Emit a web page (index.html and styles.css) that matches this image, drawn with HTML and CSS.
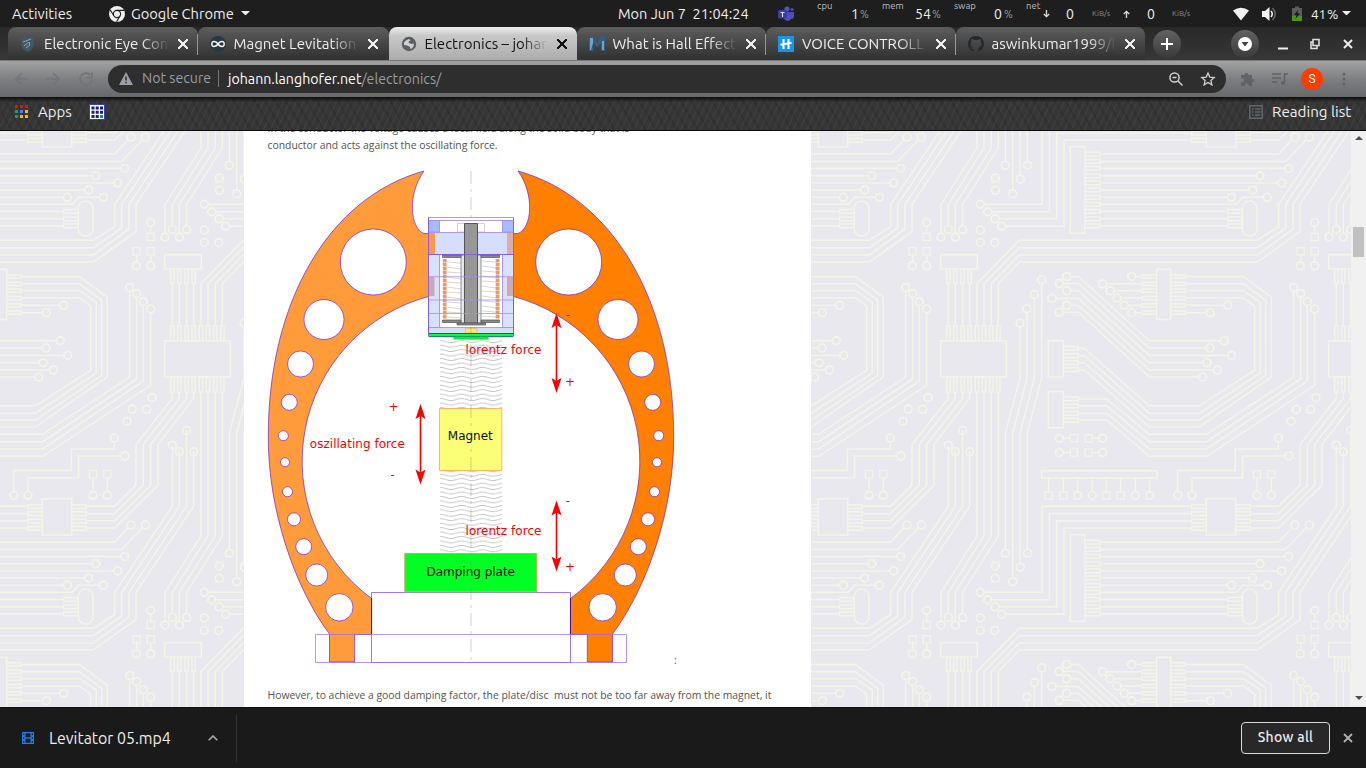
FILE: index.html
```html
<!DOCTYPE html>
<html lang="en">
<head>
<meta charset="utf-8">
<title>Electronics – johann.langhofer.net</title>
<link rel="stylesheet" href="styles.css">
</head>
<body>
<header class="system">
  <span>Activities</span>
  <svg class="ic16" viewBox="0 0 16 16"><circle cx="8" cy="8" r="8" fill="#eee"/><circle cx="8" cy="8" r="3.6" fill="#eee" stroke="#1e1e1e" stroke-width="1.1"/><path d="M8 4.4H15M4.8 9.8L1.3 4M11.1 9.8L7.6 15.8" stroke="#1e1e1e" stroke-width="1.1"/></svg>
  <span class="w-chrome">Google Chrome</span>
  <i class="caret"></i>
  <span class="w-date">Mon Jun 7&nbsp; 21:04:24</span>
  <svg class="ic16" viewBox="0 0 16 16"><circle cx="9" cy="3" r="2.6" fill="#5558af"/><circle cx="14" cy="3.5" r="1.7" fill="#4648a0"/><path d="M6 6H16V10a3 3 0 0 1-3 3Q10 17 6 13Z" fill="#4d50b5"/><rect y="4" width="9" height="8.500" rx="1" fill="#3b3da5"/><path d="M2.500 6.500H6.500M4.500 6.500V11" stroke="#ddd" stroke-width="1.100"/></svg>
  <small>cpu</small><b>1</b><em>%</em>
  <small>mem</small><b>54</b><em>%</em>
  <small>swap</small><b>0</b><em>%</em>
  <small>net</small>
  <svg class="arr" viewBox="0 0 7 8"><path d="M3.500 0V6.500M.8 4L3.500 6.700 6.200 4" stroke="#ddd" fill="none" stroke-width="1.300"/></svg>
  <b>0</b><em class="unit">KiB/s</em>
  <svg class="arr" viewBox="0 0 7 8"><path d="M3.500 8V1.500M.8 4L3.500 1.300 6.200 4" stroke="#ddd" fill="none" stroke-width="1.300"/></svg>
  <b>0</b><em class="unit">KiB/s</em>
  <svg class="ic16" viewBox="0 0 16 16"><path d="M0 4.500Q8-1 16 4.500L8 14.500Z" fill="#f2f2f2"/></svg>
  <svg class="ic16" viewBox="0 0 16 16"><path d="M0 5H3L7.500 1V15L3 11H0Z" fill="#f2f2f2"/><path d="M9 5Q11.500 8 9 11" stroke="#eee" stroke-width="1.600" fill="none"/><path d="M10.500 2Q16 8 10.500 14" stroke="#666" stroke-width="1.600" fill="none"/></svg>
  <svg class="ic16" viewBox="0 0 16 16"><path d="M0 2H3V.500H7V2H10V15H0Z" fill="#5c5c5c"/><path d="M0 10H10V15H0Z" fill="#4e9a06"/><path d="M6 4L2 9H4.500L3.500 13 8 7.500H5.500Z" fill="#1a1a1a"/></svg>
  <span class="w-bat">41&#8202;%</span>
  <i class="caret"></i>
</header>

<nav class="tabs">
  <div class="tab sep">
    <svg class="ic16" viewBox="0 0 16 16"><path d="M1 2Q5 2 8 0Q10 2 14 2V8Q14 13 8 16Q1 13 1 8Z" fill="#3e5866"/><path d="M3 6L11 3M4 10L9 6L10 9L6 12" stroke="#98a5ab" fill="none"/></svg>
    <span class="title t1">Electronic Eye Con</span><i class="x"></i>
  </div>
  <div class="tab last-left">
    <svg class="ic16" viewBox="0 0 16 16"><circle cx="8" cy="8" r="8" fill="#263840"/><path d="M8 8C6 5 1.800 4.500 1.800 8S6 11 8 8S14.200 4.500 14.200 8S10 11 8 8" fill="none" stroke="#fff" stroke-width="1.400"/></svg>
    <span class="title t2">Magnet Levitation</span><i class="x"></i>
  </div>
  <div class="tab active">
    <svg class="ic16" viewBox="0 0 16 16"><circle cx="8" cy="8" r="7.200" fill="#5a5d62"/><path d="M3 6.500Q5 3.500 8 3L9.500 4.500 7.500 5.500 8 7 10.500 8 12.800 7.500V9.500Q12 12 9.500 13L9 11 6.500 9.500 3 9Z" fill="#cfcfcf"/></svg>
    <span class="title t3">Electronics – johar</span><i class="x"></i>
  </div>
  <div class="tab sep first-right">
    <svg class="ic16" viewBox="0 0 16 16"><path d="M0 0H4L8 7 11 0H16V15H12V7L8 11 4 6V15H0Z" fill="#365e83"/><path d="M1 2H4V7L2 14H1ZM13 5H15V14H13Z" fill="#68a9c9"/></svg>
    <span class="title t4">What is Hall Effect</span><i class="x"></i>
  </div>
  <div class="tab sep">
    <svg class="ic16" viewBox="0 0 16 16"><path d="M0 0H16V16H0Z" fill="#1595f3"/><path d="M5.500 3V13M10.500 3V13M2.500 8.800L13.500 6.800" stroke="#fff" stroke-width="2.100"/></svg>
    <span class="title t5">VOICE CONTROLL</span><i class="x"></i>
  </div>
  <div class="tab">
    <svg class="ic16" viewBox="0 0 16 16"><path d="M5.500 15.500V13C3 13.500 3 11.500 1.800 11C3.500 10.500 3.800 12.500 5.500 11.800C2.500 11 2 8 3.400 5.500Q3 4 3.600 3Q5 3 6 4H10Q11 3 12.400 3Q13 4 12.600 5.500C14 8 13.500 11 10.500 11.600V15.500A8 8 0 1 0 5.500 15.500" fill="#24292f"/></svg>
    <span class="title t6">aswinkumar1999/l</span><i class="x"></i>
  </div>
  <div class="round plus"><svg viewBox="0 0 12 12"><path d="M6 0V12M0 6H12" stroke="#fff" stroke-width="2"/></svg></div>
  <div class="round search"><svg viewBox="0 0 14 14"><circle cx="7" cy="7" r="7" fill="#fff"/><path d="M3.500 5H10.500L7 9.500Z" fill="#444"/></svg></div>
  <svg class="win" viewBox="0 0 76 12"><path d="M0 10.500H10" stroke="#eee" stroke-width="2"/><path d="M35 1.500H41V7.500H35ZM35 4H33V10.500H39V8" stroke="#ddd" stroke-width="1.600" fill="none"/><path d="M66 2L74 10M74 2L66 10" stroke="#eee" stroke-width="2"/></svg>
</nav>

<div class="toolbar">
  <svg class="navs" viewBox="0 0 80 16" fill="none" stroke="#737578" stroke-width="1.700"><path d="M14 8H2M8 2L2 8 8 14M32 8H45M39 2L45 8 39 14"/><path d="M76.500 4A6 6 0 1 0 78 9M78 1.500V6.500H72.500"/></svg>
  <div class="omni">
    <svg class="warn" viewBox="0 0 14 13"><path d="M7 0L14 13H0Z" fill="#9aa0a6"/><path d="M7 4.500V8.500M7 9.700V11.300" stroke="#2d2d2d" stroke-width="1.500"/></svg>
    <span class="insecure">Not secure</span>
    <span class="url"><span>johann.langhofer.net</span><span class="path">/electronics/</span></span>
    <svg class="oicons" viewBox="0 0 48 16" fill="none" stroke="#cfd0d2" stroke-width="1.500"><circle cx="6.500" cy="6.500" r="4.600"/><path d="M10 10L14.500 14.500M4.500 6.500H8.500"/><path d="M40 2L41.800 6.100 46.200 6.500 42.900 9.500 43.900 13.900 40 11.500 36.100 13.900 37.100 9.500 33.800 6.500 38.200 6.100Z" stroke-width="1.300"/></svg>
  </div>
  <svg class="ext" viewBox="0 0 48 16"><path d="M1 4H4.500A2 2 0 1 1 8.500 4H12V7.500A2 2 0 1 1 12 11.500V15H8.800A2 2 0 1 0 4.500 15H1V11A2 2 0 1 0 1 7.500Z" fill="#606367"/><path d="M32 3H41M32 7H41M32 11H37.500M44.500 12V3H48" stroke="#606367" stroke-width="1.600" fill="none"/><circle cx="43" cy="12" r="2.100" fill="#606367"/></svg>
  <span class="avatar">S</span>
  <svg class="dots" viewBox="0 0 4 14" fill="#606367"><circle cx="2" cy="2" r="1.500"/><circle cx="2" cy="7" r="1.500"/><circle cx="2" cy="12" r="1.500"/></svg>
</div>

<div class="bookmarks">
  <svg class="grid" viewBox="0 0 13 13"><path d="M0 0H3V3H0ZM5 0H8V3H5ZM10 0H13V3H10Z" fill="#f00d0d"/><path d="M0 5H3V8H0ZM0 10H3V13H0Z" fill="#19a15f"/><path d="M5 5H8V8H5Z" fill="#4285f4"/><path d="M10 5H13V8H10ZM5 10H8V13H5ZM10 10H13V13H10Z" fill="#fbb713"/></svg>
  <span class="apps">Apps</span>
  <svg class="ic16" viewBox="0 0 16 16"><path d="M.5.500H15.500V15.500H.5Z" fill="#fff" stroke="#3b3bc4"/><path d="M2.500 2.500H5.500V5.500H2.500ZM6.700 2.500H9.700V5.500H6.700ZM11 2.500H14V5.500H11ZM2.500 6.700H5.500V9.700H2.500ZM6.700 6.700H9.700V9.700H6.700ZM11 6.700H14V9.700H11ZM2.500 11H5.500V14H2.500ZM6.700 11H9.700V14H6.700Z" fill="#14217e"/><path d="M11 11H14V14H11Z" fill="#0a8f91"/></svg>
  <svg class="rl" viewBox="0 0 14 14" fill="none" stroke="#62656a"><path d="M.8.800H13.200V13.200H.8Z" stroke-width="1.500"/><path d="M3 4H4.500M6 4H11.500M3 7H4.500M6 7H11.500M3 10H4.500M6 10H11.500" stroke-width="1.400"/></svg>
  <span class="reading">Reading list</span>
</div>

<main class="view">
  <svg class="board" width="1358" height="577" viewBox="0 1 1358 577">
    <defs>
      <g id="tile">
        <g transform="translate(29) scale(.33333 .36994)">
          <path class="tr" d="M40 997h88v98h-88zM-4 1013h44v10h-44zM-4 1032h44v10h-44zM-4 1052h44v10h-44zM-4 1072h44v10h-44zM128 1013h44v10h-44zM128 1032h44v10h-44zM128 1052h44v10h-44zM128 1072h44v10h-44z"/>
          <path class="tr" d="M526 201H711V-32H1160M548 221H733V-12H1160M570 240H755V8H1160M590 260H777V27H1160"/>
          <path class="tr" d="M430 708V725L321 850V960L257 1017H172M451 708V725L343 850V960L257 1037H172M473 708V725L365 850V960L257 1056H172M494 708V725L387 850V960L257 1076H172"/>
          <path class="tr" d="M796 45h44v234h-44zM840 60h45v10h-45zM840 80h45v10h-45zM840 99h45v10h-45zM840 119h45v10h-45zM840 138h45v10h-45zM840 157h45v10h-45zM840 177h45v10h-45zM840 196h45v10h-45zM840 215h45v10h-45zM840 235h45v10h-45zM840 254h45v10h-45z"/>
          <path class="tr" d="M885 65H1421L1470 19M885 85H1442L1512 19M885 104H1451M885 124H1365M885 143H1430M885 162H1343M885 182H1279M885 201H1295L1313 182H1387M885 220H1268M885 240H1268M885 259H1268"/>
          <rect class="tr" x="148" y="192" width="44" height="95" rx="22" ry="20"/>
          <path class="tr" d="M104 215h44v10h-44zM104 235h44v10h-44zM104 254h44v10h-44z"/>
          <path class="tr" d="M516 530V415L643 298H1357L1421 261V201L1594 -32V-197M537 530V415L643 318H1357L1442 265V201L1615 -32V-179M559 530V415L643 338H1357L1464 268V201L1637 -32V-237M580 530V415L643 357H1357L1485 275V201L1658 -32V-179"/>
          <path class="tr" d="M516 708V1097L408 1250V1338M537 708V1097L430 1250V1318M559 708V1097L451 1250V1338M580 708V1097L473 1250V1318"/>
          <path class="tr" d="M407 337h110v39h-110zM407 570h197v98h-197zM425 376h10v39h-10zM446 376h10v39h-10zM468 376h10v39h-10zM489 376h10v39h-10zM430 415V530M451 415V530M473 415V530M494 415V530"/>
          <path class="tr" d="M425 530h10v40h-10zM446 530h10v40h-10zM468 530h10v40h-10zM489 530h10v40h-10zM511 530h10v40h-10zM532 530h10v40h-10zM554 530h10v40h-10zM575 530h10v40h-10zM425 668h10v40h-10zM446 668h10v40h-10zM468 668h10v40h-10zM489 668h10v40h-10zM511 668h10v40h-10zM532 668h10v40h-10zM554 668h10v40h-10zM575 668h10v40h-10z"/>
          <path class="tr" d="M645 522V670L601 820V1144M666 483V670L623 820V1221M688 445V670L645 820V1183M710 405V670L667 820V1144M365 250V289M323 328V367M365 328V367"/>
          <path class="tr" d="M730 570h45v98h-45zM730 707h45v98h-45zM776 585h44v10h-44zM776 605h44v10h-44zM776 624h44v10h-44zM776 643h44v10h-44zM776 722h44v10h-44zM776 741h44v10h-44zM776 761h44v10h-44zM776 780h44v10h-44zM763 833H807M763 872H807M851 833H893M851 872H893M710 921H1056V941H710ZM731 941V988M775 941V988M818 941V988M862 941V988M904 941V988M947 941V988M991 941V988M1034 941V988"/>
          <path id="p1" class="pad" d="M526 201h0M548 221h0M570 240h0M590 260h0M306 19h0M349 19h0M287 104h0M201 124h0M266 143h0M179 162h0M115 182h0M223 182h0M430 852h0M451 870h0M473 812h0M494 870h0M408 289h0M430 269h0M451 289h0M473 269h0M645 522h0M666 483h0M688 445h0M710 405h0M601 95h0M623 172h0M646 133h0M668 95h0M571 130h0M571 163h0M526 270h0M526 304h0M569 304h0M369 723h0M310 755h0M353 755h0M294 787h0M365 250h0M322 367h0M365 367h0M785 396h0M763 415h0M785 434h0M741 455h0M785 474h0M763 493h0M763 833h0M763 872h0M893 833h0M893 872h0M818 988h0M862 988h0M991 988h0M1034 988h0"/>
          <use href="#p1" class="hole"/>
          <path id="q1" class="pad sq" d="M365 289h0M323 328h0M365 328h0M807 833h0M851 833h0M807 872h0M851 872h0M731 988h0M775 988h0M904 988h0M947 988h0"/>
          <use href="#q1" class="hole"/>
        </g>
        <g transform="translate(309) scale(.33333 .40686)">
          <path class="tr" d="M626 387V607L365 748H193L65 661H-20M647 402V612L365 766H193L65 678H-20M667 422V617L365 784H193L65 696H-20M689 440V627L365 802H193L65 713H-20"/>
          <path class="tr" d="M301 360H475L559 411V607L343 730H193L-2 590H-20M301 378H475L542 418V603L343 713H193L-2 572H-20M301 395H475L526 423V597L343 696H193L-2 555H-20M301 413H475L509 433V590L343 678H193L-2 537H-20M301 431H428M301 449H376"/>
          <path class="tr" d="M215 342h42v124h-42zM171 356h44v8h-44zM171 374h44v8h-44zM171 391h44v8h-44zM171 409h44v8h-44zM171 427h44v8h-44zM171 445h44v8h-44zM257 356h44v8h-44zM257 374h44v8h-44zM257 391h44v8h-44zM257 409h44v8h-44zM257 427h44v8h-44zM257 445h44v8h-44z"/>
          <path class="tr" d="M140 360H171M53 378H171M75 395H171M96 413H171M118 431H171M140 449H171M-55 360H-20L193 518H418M-77 377H-20L193 536H375M-55 395H-20L193 554H440M-99 414H-20L193 572H366M-55 431H-20L193 590H397M-77 448H-20L193 607H353"/>
          <path class="tr" d="M278 898V837H451V784H580V757M321 898V855H473V801H612M516 846V898M559 846V898"/>
          <path id="p2" class="pad" d="M626 387h0M647 402h0M667 422h0M689 440h0M428 431h0M376 449h0M140 360h0M53 378h0M75 395h0M96 413h0M118 431h0M140 449h0M418 518h0M375 536h0M440 554h0M366 572h0M397 590h0M353 607h0M-55 360h0M-77 377h0M-55 395h0M-99 414h0M-55 431h0M-77 448h0M278 898h0M321 898h0M580 757h0M612 801h0M516 898h0M559 898h0"/>
          <use href="#p2" class="hole"/>
          <path id="q2" class="pad sq" d="M516 846h0M559 846h0"/>
          <use href="#q2" class="hole"/>
        </g>
      </g>
      <g id="row"><use href="#tile" x="-388"/><use href="#tile"/><use href="#tile" x="388"/><use href="#tile" x="776"/><use href="#tile" x="1164"/></g>
    </defs>
    <use href="#row" y="-388"/><use href="#row"/><use href="#row" y="388"/>
  </svg>

  <article class="post">
    <p class="cut">In the conductor the voltage causes a local field along the solid body that is<br>conductor and acts against the oscillating force.</p>
    <div class="figure">
    <svg width="408" height="500" viewBox="267 165 408 500">
      <defs>
        <pattern id="wave" x="451" y="339.500" width="21" height="4.450" patternUnits="userSpaceOnUse"><path d="M0 3.200C4 3.200 6.500 1.200 10.500 1.200S17 3.200 21 3.200" fill="none" stroke="#b4b4b4" stroke-width=".8"/></pattern>
        <g id="arm">
          <path d="M424 171C330 197 268 300 268.300 437C268 510 295 588 329.500 634V662H354.700V634.500H371.600V598.500A170.500 170.500 0 0 1 428.500 296.500V233.500H424C410 228 407 195 424 171Z"/>
          <g fill="#fff"><circle cx="373.300" cy="262" r="33"/><circle cx="324" cy="319.500" r="20"/><circle cx="300.500" cy="364" r="13"/><circle cx="289.300" cy="402.300" r="8"/><circle cx="283.300" cy="435.700" r="5"/><circle cx="285" cy="462.300" r="4.500"/><circle cx="287.500" cy="491.700" r="5"/><circle cx="294" cy="519.300" r="6.500"/><circle cx="303.700" cy="546.700" r="8"/><circle cx="316.700" cy="575" r="11"/><circle cx="339.300" cy="607.300" r="13.700"/></g>
        </g>
        <g id="arrowhead"><path d="M0 0L5 15L0 12L-5 15Z" fill="#f00"/></g>
      </defs>
      <g stroke="#7a1fd0" stroke-width=".7"><use href="#arm" fill="#ff9b3b"/><use href="#arm" fill="#ff7f00" transform="matrix(-1 0 0 1 942 0)"/></g>
      <g fill="none" stroke="#9468ff" stroke-width=".9"><path d="M371.500 592.500H570.500V662.500H371.500Z"/><path d="M315.500 634.500H626.500V662.500H315.500Z" stroke-width=".7"/></g>
      <path d="M371.500 598V634M570.500 598V634" stroke="#4a0aa5"/>
      <path d="M440 340H502V408H440ZM440 471H502V553H440Z" fill="url(#wave)"/>
      <g stroke="#a98bf5" stroke-width=".9">
        <path d="M428.500 217.500H513.500V336H428.500Z" fill="#fff"/><path d="M428.500 220.500H513.500" />
        <path d="M428.500 220.500H439.500V232H428.500ZM502.500 220.500H513.500V232H502.500Z" fill="#a9bbff"/>
        <path d="M457.500 223.500H484.500V232H457.500Z" fill="#fff" stroke="#ccc"/>
        <path d="M428.500 232.500H513.500V254.500H428.500Z" fill="#d5deff"/>
        <path d="M428.500 254.500H439.500V327.500H428.500ZM502.500 254.500H513.500V327.500H502.500Z" fill="#d8e1ff"/>
        <path d="M428.500 327.500H513.500V333.500H428.500Z" fill="#d5deff"/>
        <path d="M428.500 233H435V254H428.500Z" fill="#ff9845" stroke="none"/><path d="M507 233H513.500V254H507Z" fill="#e0aca6" stroke="none"/>
        <path d="M428.500 277H434.500V296H428.500ZM507 277H513.500V296H507Z" fill="#cfa9b2" stroke="none"/>
      </g>
      <path d="M447 262l14 1M447 267l14 2M447 272l14 1M447 277l14 2M447 282l14 1M447 287l14 2M447 292l14 1M447 297l14 2M447 302l14 1M447 307l14 2M447 312l14 1M447 317l14 1M482 261l14 1M482 266l14 2M482 271l14 1M482 276l14 2M482 281l14 1M482 286l14 2M482 291l14 1M482 296l14 2M482 301l14 1M482 306l14 2M482 311l14 1M482 316l14 1" stroke="#bbb" stroke-width=".6"/>
      <path d="M461 255H481V323H461Z" fill="#e8e8e8" stroke="#777" stroke-width=".8"/>
      <path d="M464.500 223.500H477.500V323H464.500Z" fill="#989898" stroke="#555"/>
      <path d="M442.500 255H461V257.500H442.500ZM481 255H499.500V257.500H481ZM442.500 320H461V322.500H442.500ZM481 320H499.500V322.500H481ZM457 323H485.500V325H457Z" fill="#888" stroke="#555" stroke-width=".7"/>
      <path d="M444.700 259V319M497.600 259V319" stroke="#e89a64" stroke-width="3.800" stroke-dasharray="3.400 .6"/>
      <path d="M439.500 276.700H502.500M439.500 300H502.500M439.500 313.500H502.500M428.500 276.700H439.500M428.500 300H439.500M428.500 313.500H439.500M502.500 276.700H513.500M502.500 300H513.500M502.500 313.500H513.500" stroke="#a98bf5" stroke-width=".8"/>
      <path d="M428.500 217.500V336M513.500 217.500V336M428 254.500H514" stroke="#7a50ea" stroke-width=".8"/>
      <path d="M465.500 328.500H477V333H465.500Z" fill="#ffe878" stroke="#e0b060" stroke-width=".6"/>
      <path d="M429 334H513V336.500H429Z" fill="#0f3"/><path d="M428.500 333.500H513.500M428.500 336.700H513.500" stroke="#183a80" stroke-width=".8"/>
      <path d="M453.500 336.700H488.500V339.500H453.500Z" fill="#00f52e"/>
      <path d="M439.500 408.500H501.800V470.500H439.500Z" fill="#faff75" stroke="#ffb36b"/>
      <path d="M404.800 553.500H536.800V591.800H404.800Z" fill="#00ff22" stroke="#d8a848"/>
      <path d="M471 171V662" stroke="#888" stroke-opacity=".4" stroke-dasharray="13 5 3 5"/>
      <g stroke="#f00" stroke-width="1.600"><path d="M556.500 322V384M420.500 412V476M556.500 510V562"/></g>
      <use href="#arrowhead" x="556.500" y="313"/><use href="#arrowhead" transform="translate(556.500 393) scale(1 -1)"/>
      <use href="#arrowhead" x="420.500" y="404"/><use href="#arrowhead" transform="translate(420.500 484.500) scale(1 -1)"/>
      <use href="#arrowhead" x="556.500" y="500.500"/><use href="#arrowhead" transform="translate(556.500 571.500) scale(1 -1)"/>
      <g class="lbl red">
        <text x="465.500" y="354" textLength="76">lorentz force</text><text x="465.500" y="535" textLength="76">lorentz force</text><text x="309.800" y="448" textLength="95">oszillating force</text>
        <text x="388.500" y="411">+</text><text x="390.500" y="478.500">-</text><text x="566" y="319">-</text><text x="565" y="385.500">+</text><text x="565.800" y="504.500">-</text><text x="565" y="571">+</text>
      </g>
      <g class="lbl"><text x="447.800" y="439.500" textLength="45">Magnet</text><text x="426.500" y="576" textLength="88.500">Damping plate</text></g>
    </svg><span class="colon">:</span>
    </div>
    <p class="after">However, to achieve a good damping factor, the plate/disc&nbsp; must not be too far away from the magnet, it</p>
  </article>
  <div class="scroll"><i class="up"></i><i class="thumb"></i><i class="down"></i></div>
</main>

<footer class="downloads">
  <svg class="film" viewBox="0 0 12 12"><path d="M0 0H12V12H0Z" fill="#1a82e8"/><path d="M3.500 1.300H8.500V5.300H3.500ZM3.500 6.700H8.500V10.700H3.500ZM1 1.500H2.300V3H1ZM1 5.200H2.300V6.700H1ZM1 9H2.300V10.500H1ZM9.700 1.500H11V3H9.700ZM9.700 5.200H11V6.700H9.700ZM9.700 9H11V10.500H9.700Z" fill="#1a1a1a"/></svg>
  <span class="file">Levitator 05.mp4</span>
  <svg class="chev" viewBox="0 0 10 6"><path d="M.7 5.300L5 1 9.300 5.300" fill="none" stroke="#aaa" stroke-width="1.600"/></svg>
  <button class="all">Show all</button>
  <svg class="dx" viewBox="0 0 10 10"><path d="M1 1L9 9M9 1L1 9" stroke="#b0b0b0" stroke-width="1.800"/></svg>
</footer>
</body>
</html>
```
FILE: styles.css
```css
* { box-sizing: border-box; }
body { margin: 0; width: 1366px; height: 768px; overflow: hidden; display: flex; flex-direction: column; background: #1a1a1a; font: 15px/20px Ubuntu, "Noto Sans", sans-serif; color: #eee; }
svg { display: block; flex: none; }
span, small, b, em { white-space: nowrap; }
.ic16 { width: 16px; height: 16px; }

.system { height: 27px; flex: none; background: #1e1e1e; padding-left: 12px; display: grid; align-items: center; grid-template-columns: 97px 22px 110px 377px 160px 39px 34px 9px 22px 33px 17px 22px 40px 10px 22px 17px 23px 26px 31px 24px 25px 61px 29px 30px 19px 31px 12px; font-size: 14.67px; }
.system .w-date { font-size: 14.5px; }
.system .w-bat { font-size: 13.5px; }
.system small { font-size: 9.5px; line-height: 12px; align-self: start; color: #bbb; }
.system b { font-weight: 400; font-size: 14px; }
.system em { font-style: normal; font-size: 10.5px; color: #999; }
.system em.unit { font-size: 8px; color: #888; }
.arr { width: 7px; height: 8px; }
.caret { border: 4.5px solid transparent; border-top-color: #eee; border-bottom: 0; width: 9px; height: 4.5px; }

.tabs { height: 33px; flex: none; padding-left: 8px; display: flex; background: linear-gradient(#282828, #373737); }
.tab { width: 189.500px; height: 33px; padding: 0 10px 0 12px; display: flex; align-items: center; border-radius: 8px 8px 0 0; background: linear-gradient(#5d5d5d, #303030); position: relative; }
.tab.sep::after { content: ""; position: absolute; right: 0; top: 7px; width: 1px; height: 21px; background: #999; }
.tab.last-left { border-bottom-right-radius: 8px; width: 191px; }
.tab.first-right { border-bottom-left-radius: 8px; }
.tab.active { width: 188px; background: linear-gradient(#eee 0, #c9c9c9 25%, #acacac); color: #111; }
.tabs .title { margin-left: 8px; width: 125px; -webkit-mask-image: linear-gradient(90deg, #000 78%, transparent); mask-image: linear-gradient(90deg, #000 78%, transparent); }
.x { margin-left: 9px; width: 10px; height: 10px; background: linear-gradient(45deg, transparent 43%, currentColor 43% 57%, transparent 57%), linear-gradient(-45deg, transparent 43%, currentColor 43% 57%, transparent 57%); }
.round { width: 28px; height: 28px; margin: 3px 0 0 8px; border-radius: 50%; background: linear-gradient(#626262, #3a3a3a); display: flex; align-items: center; justify-content: center; }
.plus svg { width: 12px; height: 12px; }
.search { margin-left: auto; }
.search svg { width: 14px; height: 14px; }
.win { width: 76px; height: 12px; margin: 11px 12px 0 19px; }

.toolbar { height: 37px; flex: none; border-top: 1px solid #777; padding: 4px 19px 5px 14px; display: flex; align-items: center; background: linear-gradient(#a2a2a2, #7d7f82 50%, #67696c); font-size: 14.2px; }
.navs { width: 80px; height: 16px; }
.omni { width: 1118px; height: 28px; margin-left: 14px; border-radius: 14px; background: #2e2e2e; padding: 0 10px 0 11px; display: flex; align-items: center; }
.warn { width: 14px; height: 13px; }
.insecure { margin-left: 9px; width: 77px; height: 17px; line-height: 17px; border-right: 1px solid #777; color: #9a9da1; }
.url { margin-left: 9px; color: #fff; }
.path { color: #9a9da1; }
.oicons { width: 48px; height: 16px; margin-left: auto; }
.ext { width: 48px; height: 16px; margin-left: 14px; }
.avatar { width: 22px; height: 22px; margin-left: 13px; border-radius: 50%; background: #ff3d00; color: #fff; font: 12px/22px Roboto, sans-serif; text-align: center; }
.dots { width: 4px; height: 14px; margin-left: 19px; }

.bookmarks { height: 34px; flex: none; padding: 0 14px 4px 15px; border-bottom: 1px solid #0a0a0a; display: flex; align-items: center; background: linear-gradient(#0d0d0d, rgba(13,13,13,0) 5px), repeating-linear-gradient(115deg, rgba(255,255,255,.035) 0 1px, transparent 2px 6px), repeating-linear-gradient(60deg, rgba(0,0,0,.09) 0 2px, transparent 3px 9px), #363636; }
.grid { width: 13px; height: 13px; }
.apps { margin-left: 10px; width: 51px; }
.rl { width: 14px; height: 14px; margin-left: auto; }
.reading { width: 80px; margin-left: 9px; font-size: 15.2px; }

.view { height: 576px; flex: none; position: relative; overflow: hidden; background: #e9e8ee; padding-left: 244px; display: flex; }
.board { position: absolute; left: 0; top: 0; }
.tr { fill: none; stroke: #f2f5e7; stroke-width: 1.5px; vector-effect: non-scaling-stroke; }
.pad { fill: none; stroke: #f2f5e7; stroke-width: 9.5px; stroke-linecap: round; vector-effect: non-scaling-stroke; }
.sq { stroke-linecap: square; stroke-width: 8.5px; }
#p1, #p2 { stroke: var(--c, #f2f5e7); stroke-width: var(--w, 9.5px); }
#q1, #q2 { stroke: var(--c, #f2f5e7); stroke-width: var(--w, 8.5px); }
.hole { --c: #e9e8ee; --w: 6px; }
.post { position: relative; width: 567px; height: 576px; overflow: hidden; background: #fff; padding-left: 23.500px; color: #555; font: 10.4px/17px "Open Sans", "Noto Sans", sans-serif; }
.post p { margin: 0; white-space: nowrap; }
.post .cut { margin-top: -11px; }
.figure { display: flex; align-items: flex-end; margin: 11px 0 0 -.5px; }
.colon { margin: 0 0 -4px -1px; }
.after { padding-top: 22px; }
.lbl { font: 12px "DejaVu Sans", sans-serif; fill: #111; }
.red { fill: #f00; }
.scroll { position: relative; margin-left: auto; width: 15px; height: 576px; background: #f1f1f1; display: flex; flex-direction: column; align-items: center; }
.up { margin-top: 5px; border: 4px solid transparent; border-bottom-color: #505050; border-top: 0; }
.thumb { margin-top: 87px; width: 11px; height: 30px; background: #c1c1c1; }
.down { margin: auto 0 7px; border: 4px solid transparent; border-top-color: #505050; border-bottom: 0; }

.downloads { flex: 1; border-top: 1px solid #111; padding: 0 13px 0 22px; display: flex; align-items: center; background: linear-gradient(#333, #333) 236px 6px / 1px 48px no-repeat, #1a1a1a; }
.film { width: 12px; height: 12px; }
.file { margin-left: 15px; width: 159px; font-size: 15.9px; }
.chev { width: 10px; height: 6px; }
.all { margin-left: auto; width: 89px; height: 32px; border: 1px solid #d8d8d8; border-radius: 4px; background: #282828; color: #eee; font: 500 14px Ubuntu, "Noto Sans", sans-serif; letter-spacing: .3px; padding: 0 0 2px; }
.dx { width: 10px; height: 10px; margin-left: 13px; }
```
